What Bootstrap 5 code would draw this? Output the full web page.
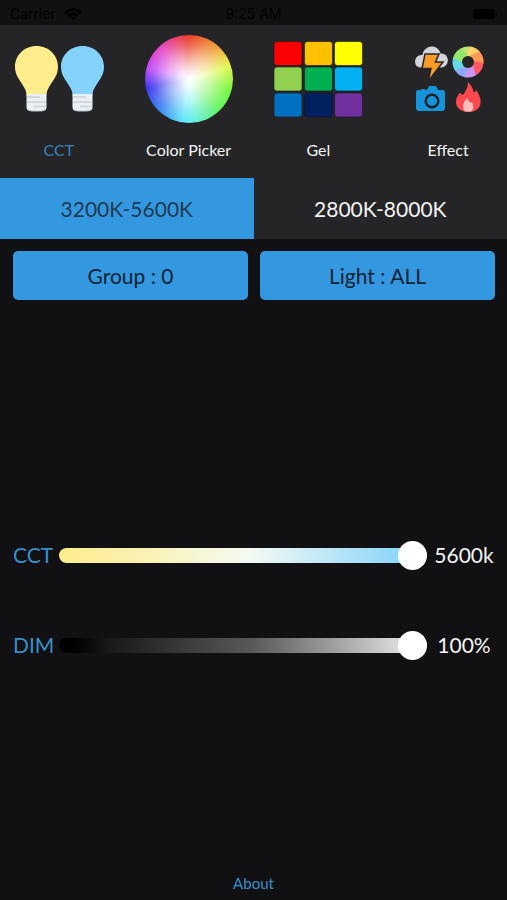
<!DOCTYPE html>
<html lang="en">
<head>
<meta charset="utf-8">
<meta name="viewport" content="width=device-width, initial-scale=1">
<title>Light Control</title>
<link href="https://cdn.jsdelivr.net/npm/bootstrap@5.3.0/dist/css/bootstrap.min.css" rel="stylesheet">
<style>
  :root { --accent: #3498e0; --panel: #252527; --ground: #111113; }
  body { background: var(--ground); color: #f4f4f4; font-family: Lato, "Liberation Sans", sans-serif; font-size: 21px; line-height: 28px; }
  .status { height: 25px; padding: 2px 10px 0; color: #020203; font-family: Inter, "Liberation Sans", sans-serif; font-size: 14px; line-height: 24px; }
  .modes { background: var(--panel); gap: 12px; height: 153px; padding-top: 5px; }
  .mode { flex: 1 1 0; min-width: 0; color: #f4f4f4; font-size: 16px; line-height: 20px; gap: 10px; }
  .mode.active { color: #3483bd; }
  .pic { width: 118px; height: 100px; }
  .wheel { width: 88px; height: 88px; margin: 5px 0 7px; background:
    radial-gradient(circle, #fff 0, rgba(255,255,255,.88) 12%, rgba(255,255,255,.55) 34%, rgba(255,255,255,.18) 56%, transparent 70%),
    conic-gradient(#ea3d27, #f2a33c 42deg, #e2f84c 72deg, #78f63e 105deg, #62f35c 135deg, #62f0e0 172deg, #62e6fb 188deg, #3f88f2 222deg, #3b35ee 258deg, #c04af8 285deg, #e846c4 318deg, #ea3d27); }
  .tab { height: 61px; background: var(--panel); color: #f4f4f4; }
  .tab, .pick { font-size: 21px; line-height: 28px; }
  .tab.active { background: var(--accent); color: #1f3a50; }
  .groups { gap: 12px; padding: 12px 12px 0 13px; }
  .pick { flex: 1 1 0; height: 49px; border-radius: 5px; background: var(--accent); color: #0d2233; }
  .sliders { padding: 235px 12px 0 13px; gap: 50px; }
  .control { height: 40px; }
  .control label { width: 46px; color: #3a8dcb; }
  .control output { width: 62px; margin-left: 6px; }
  .form-range { flex: 1 1 0; min-width: 0; height: 30px; }
  .form-range::-webkit-slider-runnable-track { height: 15px; border-radius: 8px; background: linear-gradient(90deg, #ffec8b, #f9f3bd 28%, #f4faf5 52%, #84d2fa 96%); }
  .form-range::-webkit-slider-thumb { width: 29px; height: 29px; margin-top: -7px; background: #fff; }
  .form-range::-moz-range-track { height: 15px; border-radius: 8px; background: linear-gradient(90deg, #ffec8b, #f4faf5 52%, #84d2fa); }
  .form-range::-moz-range-thumb { width: 29px; height: 29px; background: #fff; }
  .dim::-webkit-slider-runnable-track { background: linear-gradient(90deg, #000 4%, #191919 14%, #5a5a5a 53%, #a0a0a0 75%, #e8e8e8 96%); }
  .dim::-moz-range-track { background: linear-gradient(90deg, #000, #5a5a5a 53%, #e4e4e4); }
  .foot { padding-bottom: 5px; }
  .about { color: #3a8dcb; font-size: 15px; line-height: 20px; }
</style>
<script src="https://cdn.jsdelivr.net/npm/bootstrap@5.3.0/dist/js/bootstrap.bundle.min.js"></script>
</head>
<body class="d-flex flex-column min-vh-100">
  <header class="status row g-0">
    <div class="col d-flex align-items-center gap-2">Carrier
      <svg width="18" height="13" viewBox="0 0 18 13" fill="none" stroke="#020203" stroke-width="3" aria-hidden="true"><path d="M1 5Q9-2 17 5M4 8q5-4 10 0"/><path d="M6.500 9.500q2.500-2 5 0L9 12.500z" fill="#020203" stroke="none"/></svg>
    </div>
    <div class="col-auto">9:25 AM</div>
    <div class="col d-flex align-items-center justify-content-end">
      <svg width="24" height="10" viewBox="0 0 24 10" fill="#000" aria-hidden="true"><rect width="22" height="10" rx="3"/><path d="M23 3v4q2-2 0-4"/></svg>
    </div>
  </header>

  <nav class="modes d-flex" aria-label="Modes">
    <button type="button" class="mode active btn border-0 p-0 d-flex flex-column align-items-center">
      <svg class="pic" viewBox="0 0 118 100" aria-hidden="true">
        <defs>
          <path id="glass" d="M21.500 0C9 0 0 9.500 0 21C0 31 7 36 10.500 44Q11.500 47 12 51H31Q31.500 47 32.500 44C36 36 43 31 43 21C43 9.500 34 0 21.500 0Z"/>
          <g id="cap"><path d="M11.500 48h20v13q0 4-4 4h-12q-4 0-4-4z" fill="#eceff3"/><path d="M12 51h13M12 56h19M19 60.500h12" stroke="#cdd2d9" stroke-width="1.500"/><path d="M13 63.500q2 1.500 4 1.500h9q2 0 4-1.500" stroke="#bcc5cb" fill="none"/></g>
        </defs>
        <g transform="translate(15 16)"><use href="#glass" fill="#ffec8c"/><use href="#cap"/></g>
        <g transform="translate(61 16)"><use href="#glass" fill="#83d3fc"/><use href="#cap"/></g>
      </svg>
      <span>CCT</span>
    </button>
    <button type="button" class="mode btn border-0 p-0 d-flex flex-column align-items-center">
      <span class="wheel rounded-circle"></span>
      <span>Color Picker</span>
    </button>
    <button type="button" class="mode btn border-0 p-0 d-flex flex-column align-items-center">
      <svg class="pic" viewBox="0 0 118 100" aria-hidden="true">
        <g stroke="#141417" stroke-width=".6">
        <rect x="15" y="11.500" width="28" height="24" rx="3" fill="#f00"/><rect x="45.500" y="11.500" width="28" height="24" rx="3" fill="#ffc000"/><rect x="75.500" y="11.500" width="28" height="24" rx="3" fill="#ff0"/>
        <rect x="15" y="37" width="28" height="24" rx="3" fill="#92d050"/><rect x="45.500" y="37" width="28" height="24" rx="3" fill="#00b050"/><rect x="75.500" y="37" width="28" height="24" rx="3" fill="#00b0f0"/>
        <rect x="15" y="63" width="28" height="24" rx="3" fill="#0070c0"/><rect x="45.500" y="63" width="28" height="24" rx="3" fill="#002060"/><rect x="75.500" y="63" width="28" height="24" rx="3" fill="#7030a0"/>
        </g>
      </svg>
      <span>Gel</span>
    </button>
    <button type="button" class="mode btn border-0 p-0 d-flex flex-column align-items-center">
      <svg class="pic" viewBox="0 0 118 100" aria-hidden="true">
        <path d="M32 37.500C23 37 25 24 33.500 25C35 14.500 49 13.500 51.500 23.500C61 23 61.500 37 52 37.500Z" fill="#d3d4d9"/>
        <path d="M36 24h14l-3.500 8h7.500L39 51.500l3-13h-9z" fill="#f99b25" stroke="#252527" stroke-width="1.500"/>
        <g transform="translate(79 32)">
          <path d="M-2-6L-8-13A15.500 15.500 0 0 1 4-15L5-3z" fill="#b9e66c"/>
          <path d="M-2-6L2-15.400A15.500 15.500 0 0 1 12-10L6 0z" fill="#ffd36a"/>
          <path d="M2-6L11-11A15.500 15.500 0 0 1 15.500 2L5 4z" fill="#ff9a56"/>
          <path d="M6-1L15.400 1A15.500 15.500 0 0 1 8 13.300L1 6z" fill="#ff5964"/>
          <path d="M5 4L8 13.300A15.500 15.500 0 0 1-4 15L-4 4z" fill="#c996f5"/>
          <path d="M0 6L-3 15.200A15.500 15.500 0 0 1-13 8.500L-6 0z" fill="#8ea9f5"/>
          <path d="M-4 5L-13 8.500A15.500 15.500 0 0 1-15-4L-3-5z" fill="#63d9e3"/>
          <path d="M-6 0L-15-4A15.500 15.500 0 0 1-7-13.800L0-6z" fill="#92e56c"/>
          <circle r="6" fill="#252527"/>
        </g>
        <path d="M29 60h3v-1h4v1h2l2-4h7l2 4h4q3 0 3 3v15q0 3-3 3H30q-3 0-3-3V63q0-3 2-3z" fill="#1594dc"/>
        <circle cx="43" cy="71" r="6.300" fill="none" stroke="#202125" stroke-width="2.400"/>
        <path d="M79 52C82 55 84 58 84.500 62Q86 63 87 60C96 72 91 82 80 82C66 82 64 70 71 63L74 65C77 61 79 57 79 52Z" fill="#fb494e"/>
        <path d="M78 68Q80 72 82 73L83 72Q86 79 82 81.500H76Q71 76 78 68Z" fill="#ffbcbd"/>
      </svg>
      <span>Effect</span>
    </button>
  </nav>

  <div class="row g-0">
    <button type="button" class="tab active col btn border-0 rounded-0 p-0">3200K-5600K</button>
    <button type="button" class="tab col btn border-0 rounded-0 p-0">2800K-8000K</button>
  </div>

  <main class="flex-grow-1">
    <div class="groups d-flex">
      <button type="button" class="pick btn border-0 p-0">Group : 0</button>
      <button type="button" class="pick btn border-0 p-0">Light : ALL</button>
    </div>
    <div class="sliders d-flex flex-column">
      <div class="control d-flex align-items-center">
        <label for="cct">CCT</label>
        <input id="cct" class="form-range" type="range" min="3200" max="5600" value="5600">
        <output for="cct" class="text-center">5600k</output>
      </div>
      <div class="control d-flex align-items-center">
        <label for="dim">DIM</label>
        <input id="dim" class="form-range dim" type="range" min="0" max="100" value="100">
        <output for="dim" class="text-center">100%</output>
      </div>
    </div>
  </main>

  <footer class="foot text-center">
    <a href="#about" class="about text-decoration-none">About</a>
  </footer>
</body>
</html>
